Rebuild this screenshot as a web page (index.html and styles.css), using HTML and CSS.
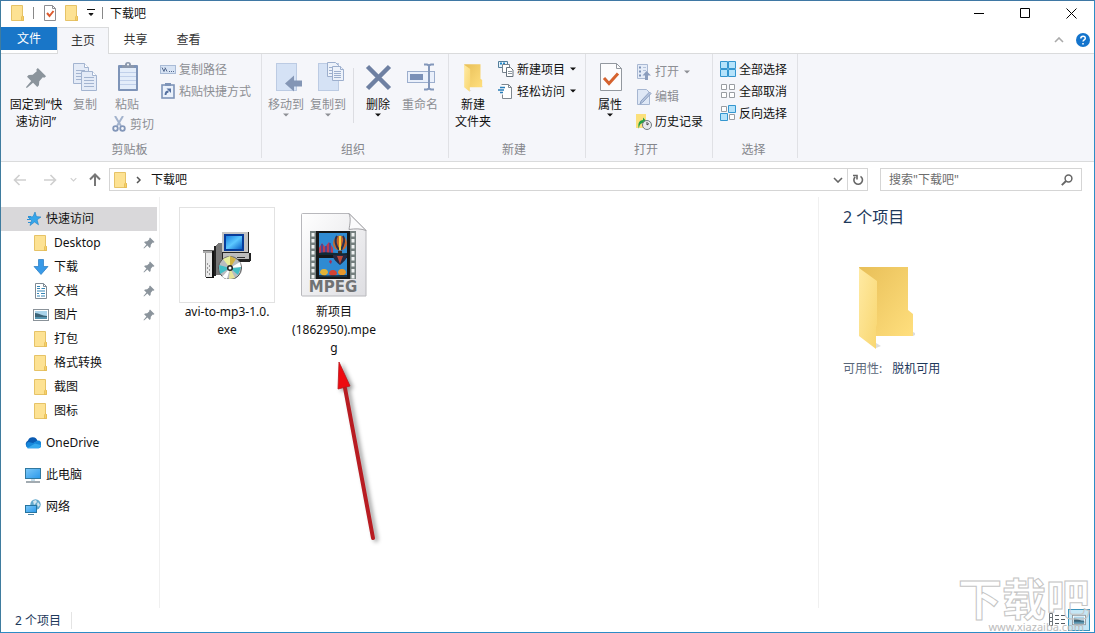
FILE: index.html
```
<!DOCTYPE html>
<html lang="zh-CN">
<head>
  <meta charset="UTF-8" />
  <meta name="viewport" content="width=device-width, initial-scale=1.0"/>
  <title>下载吧</title>
  <link rel="stylesheet" href="styles.css">
</head>
<body>
  <!-- shared icons -->
  <svg class="sprite" width="0" height="0">
    <defs>
      <linearGradient id="gold" x1="0" y1="0" x2="1" y2="1">
        <stop offset="0" stop-color="#e8bf58"/><stop offset="1" stop-color="#ffdf7e"/>
      </linearGradient>
      <linearGradient id="flap" x1="0" y1="0" x2="1" y2="1">
        <stop offset="0" stop-color="#ffeaa3"/><stop offset="1" stop-color="#f8d670"/>
      </linearGradient>
      <linearGradient id="screen" x1="0" y1="0" x2="1" y2="1">
        <stop offset="0" stop-color="#7cc8f8"/><stop offset="1" stop-color="#2a98ea"/>
      </linearGradient>
      <linearGradient id="paper" x1="0" y1="0" x2="1" y2="1">
        <stop offset="0" stop-color="#ffffff"/><stop offset="1" stop-color="#dedee2"/>
      </linearGradient>
      <linearGradient id="crt" x1="0" y1="0" x2="1" y2="1">
        <stop offset="0" stop-color="#1a80e0"/><stop offset="0.5" stop-color="#5cc8ff"/><stop offset="1" stop-color="#0a60c8"/>
      </linearGradient>
    </defs>
    <symbol id="i-folder" viewBox="0 0 16 16">
      <path d="M1.500.5h11v11h1v4h-12z" fill="#fde293" stroke="#e6c367"/>
      <path d="M11.500 15.500V12l1-1.500 1 1v4z" fill="#f6d06a" stroke="#e2b84f" stroke-width=".7"/>
    </symbol>
    <symbol id="i-bigfolder" viewBox="0 0 56 84">
      <path d="M0 1h49v43l5 4v22H12z" fill="url(#gold)"/>
      <path d="M0 2l18 13v43l-1 3v22L0 70z" fill="url(#flap)"/>
      <path d="M17 82l5-2-5-3zM54 70l4-2-4-2z" fill="#ddd"/>
    </symbol>
    <symbol id="i-check" viewBox="0 0 14 16">
      <path d="M1.500.5h8l3 3v12h-11z" fill="#fff" stroke="#8e8e92"/>
      <path d="M9.500.5v3h3" fill="none" stroke="#8e8e92"/>
      <path d="M4 8l2.500 3L10.500 6" fill="none" stroke="#dc5a2e" stroke-width="2"/>
    </symbol>
    <symbol id="i-pin" viewBox="0 0 12 12">
      <path d="M7 .5L11.500 5l-1 .8-.8-.2L7.800 7.800l-.2 2.200-.9.900L4.400 8.600 1 11.500l-.5-.5L3.400 7.600 1.100 5.300l.9-.9 2.200-.2L6.400 2.300l-.2-.9z" fill="#8b949c"/>
    </symbol>
    <symbol id="i-chev" viewBox="0 0 10 6"><path d="M1 1l4 4 4-4" fill="none" stroke="currentColor" stroke-width="1.600"/></symbol>
    <symbol id="i-tri" viewBox="0 0 6 4"><path d="M0 .5h6L3 3.500z" fill="currentColor"/></symbol>
    <symbol id="i-picture" viewBox="0 0 16 14">
      <rect x=".5" y="1.500" width="15" height="11" fill="#fff" stroke="#8a9299"/>
      <rect x="2" y="3" width="12" height="8" fill="#a9d3ea"/>
      <path d="M2 5c4 0 7 3 12 3v3H2z" fill="#3b6377"/><path d="M2 9h12v2H2z" fill="#5593ae"/>
    </symbol>
  </svg>

  <div class="window">
    <header class="titlebar">
      <svg class="ico"><use href="#i-folder"/></svg>
      <span class="bar"></span>
      <button class="quick" aria-label="属性"><svg width="14" height="16"><use href="#i-check"/></svg></button>
      <button class="quick" aria-label="新建文件夹"><svg class="ico"><use href="#i-folder"/></svg></button>
      <button class="quick more" aria-label="自定义快速访问工具栏"><svg width="8" height="8" viewBox="0 0 8 8"><path d="M0 .5h8M2 4.500h4L4 6.500z" stroke="#111" fill="#111" stroke-width="1"/></svg></button>
      <span class="bar"></span>
      <h1>下载吧</h1>
      <div class="controls">
        <button aria-label="最小化"><svg width="11" height="11"><path d="M0 5.500h10" stroke="#000"/></svg></button>
        <button aria-label="最大化"><svg width="11" height="11"><path d="M.5.5h9v9h-9z" fill="none" stroke="#000"/></svg></button>
        <button aria-label="关闭"><svg width="11" height="11"><path d="M.5.5l10 10M10.500.5l-10 10" stroke="#000"/></svg></button>
      </div>
    </header>

    <nav class="tabs">
      <button class="tab file-tab">文件</button>
      <button class="tab active">主页</button>
      <button class="tab">共享</button>
      <button class="tab">查看</button>
      <div class="tabs-end">
        <button aria-label="最小化功能区"><svg width="10" height="6" class="flip"><use href="#i-chev"/></svg></button>
        <button aria-label="帮助"><svg width="14" height="14" viewBox="0 0 14 14"><circle cx="7" cy="7" r="7" fill="#1474cc"/><path d="M4.800 5.500c0-3 4.500-3 4.500-.3C9.300 6.800 7 7 7 8.600M7 10v1.600" fill="none" stroke="#fff" stroke-width="1.500"/></svg></button>
      </div>
    </nav>

    <section class="ribbon">
      <div class="group clipboard">
        <div class="tools">
          <button class="big wide">
            <svg width="32" height="32" viewBox="0 0 32 32"><use href="#i-pin" x="5" y="5" width="22" height="22"/></svg>
            <span>固定到“快<br>速访问”</span>
          </button>
          <button class="big" disabled>
            <svg width="32" height="32" viewBox="0 0 32 32">
              <g fill="#e4ebf7" stroke="#a3b4d0"><path d="M4.500 1.500h11l4 4v16h-15z"/><path d="M15.500 1.500v4h4" fill="#fff"/><path d="M7 8.500h9M7 11.500h5M7 14.500h5M7 17.500h5"/>
              <path d="M12.500 9.500h11l4 4v15h-15z"/><path d="M23.500 9.500v4h4" fill="#fff"/><path d="M15 15.500h10M15 18.500h10M15 21.500h10M15 24.500h10"/></g>
            </svg>
            <span>复制</span>
          </button>
          <div class="stack">
            <button class="big" disabled>
              <svg width="32" height="32" viewBox="0 0 32 32">
                <rect x="7" y="3" width="20" height="26" rx="1" fill="#7e94b8"/><rect x="9" y="6" width="16" height="21" fill="#e3edfa"/>
                <path d="M9 10.500h16M9 14.500h16M9 18.500h16M9 22.500h16" stroke="#c0d0ea"/><path d="M11 6V3h3a3 3 0 0 1 6 0h3v3z" fill="#8b98ad"/><circle cx="17" cy="2.500" r="1" fill="#fff"/>
              </svg>
              <span>粘贴</span>
            </button>
            <button class="small cut" disabled>
              <svg class="ico" viewBox="0 0 16 16"><path d="M4 0l6 10M12 0L6 10" stroke="#a3b3cd" stroke-width="2"/><g fill="none" stroke="#8397b9" stroke-width="1.800"><circle cx="4.500" cy="12.500" r="2.300"/><circle cx="11.500" cy="12.500" r="2.300"/></g></svg>
              剪切
            </button>
          </div>
          <div class="rows">
            <button class="small" disabled>
              <svg class="ico" viewBox="0 0 16 16"><rect x=".5" y="4.500" width="15" height="8" fill="#d7e3f4" stroke="#a9bbd6"/><path d="M2 6.500l2 4 1-3M5 6.500l2 4M9 10.500h1M11 10.500h1M13 10.500h1" fill="none" stroke="#53688d"/></svg>
              复制路径
            </button>
            <button class="small" disabled>
              <svg class="ico" viewBox="0 0 16 16"><rect x="2" y="2" width="12" height="13" fill="#eaf1fb" stroke="#7e94b8" stroke-width="1.600"/><path d="M5 0h6v3H5z" fill="#7e94b8"/><path d="M5.500 12c0-2.500.5-3.500 3-3.500" fill="none" stroke="#54709f" stroke-width="1.800"/><path d="M6.500 5.500H11V10z" fill="#54709f"/></svg>
              粘贴快捷方式
            </button>
          </div>
        </div>
        <h2>剪贴板</h2>
      </div>

      <div class="group organise">
        <div class="tools">
          <button class="big" disabled>
            <svg width="32" height="32" viewBox="0 0 32 32"><rect x="6.500" y="1.500" width="20" height="27" fill="#d5e2f5" stroke="#bccbe3"/><path d="M15 21.500l9-8v5h8v6h-8v5z" fill="#8496b5"/></svg>
            <span>移动到</span>
            <svg class="tri"><use href="#i-tri"/></svg>
          </button>
          <button class="big" disabled>
            <svg width="32" height="32" viewBox="0 0 32 32"><rect x="6.500" y="1.500" width="20" height="27" fill="#d5e2f5" stroke="#bccbe3"/><g fill="#edf2fa" stroke="#9dafcd"><path d="M15.500.5h8l3 3v11h-11z"/><path d="M20.500 4.500h8l3 3v11h-11z"/><path d="M28.500 4.500v3h3M22 9.500h7M22 11.500h7M22 13.500h7M22 15.500h7M17 5.500h3M17 8.500h3M17 11.500h3"/></g></svg>
            <span>复制到</span>
            <svg class="tri"><use href="#i-tri"/></svg>
          </button>
          <span class="split"></span>
          <button class="big">
            <svg width="32" height="32" viewBox="0 0 32 32"><path d="M5.500 4.500l22 22M27.500 4.500l-22 22" stroke="#6e80a2" stroke-width="4.500"/></svg>
            <span>删除</span>
            <svg class="tri"><use href="#i-tri"/></svg>
          </button>
          <button class="big" disabled>
            <svg width="32" height="32" viewBox="0 0 32 32"><rect x="3.500" y="9.500" width="27" height="11" fill="#eaf0fb" stroke="#9caecd"/><rect x="6" y="12" width="13" height="6" fill="#7a90b7"/><path d="M20 2.500h3l2 1 2-1h3M25 3v24M20 27.500h3l2-1 2 1h3" fill="none" stroke="#8397ba" stroke-width="2"/></svg>
            <span>重命名</span>
          </button>
        </div>
        <h2>组织</h2>
      </div>

      <div class="group new">
        <div class="tools">
          <button class="big">
            <svg width="32" height="32" viewBox="0 0 32 32"><use href="#i-bigfolder" x="7" y="2" width="19" height="28"/></svg>
            <span>新建<br>文件夹</span>
          </button>
          <div class="rows">
            <button class="small">
              <svg class="ico" viewBox="0 0 16 16"><path d="M.5.5h9v6h-9z" fill="#e6f3fb" stroke="#547e9b"/><path d="M2 2.500h2M5 2.500h2" stroke="#2386c6" stroke-width="2"/><path d="M4.500 3.500h7v8h-7z" fill="#fff" stroke="#77838e"/><path d="M8.500 6.500h4l2.500 2.500v6.500H8.500z" fill="#fff" stroke="#66717c"/><path d="M10 10.500h4M10 12.500h4" stroke="#8c969f"/></svg>
              新建项目 <svg class="tri"><use href="#i-tri"/></svg>
            </button>
            <button class="small">
              <svg class="ico" viewBox="0 0 16 16"><path d="M3.500 1.500h7l3 3v11h-9v-4" fill="#fff" stroke="#7e878f"/><path d="M10.500 1.500v3h3" fill="none" stroke="#7e878f"/><path d="M2 4.500h5M0 7h6M2 9.500h3" stroke="#2a7db8" stroke-width="1.500"/></svg>
              轻松访问 <svg class="tri"><use href="#i-tri"/></svg>
            </button>
          </div>
        </div>
        <h2>新建</h2>
      </div>

      <div class="group open">
        <div class="tools">
          <button class="big">
            <svg width="32" height="32" viewBox="0 0 32 32"><path d="M6.500 1.500h16l5 5v22h-21z" fill="#fcfcfd" stroke="#93989f"/><path d="M22.500 1.500v5h5" fill="none" stroke="#93989f"/><path d="M10 16l5 5.500 9-10" fill="none" stroke="#d5622e" stroke-width="3"/></svg>
            <span>属性</span>
            <svg class="tri"><use href="#i-tri"/></svg>
          </button>
          <div class="rows tall">
            <button class="small" disabled>
              <svg class="ico" viewBox="0 0 16 16"><path d="M1.500.5h10v14h-10z" fill="#e5ecf8" stroke="#a9b8d2"/><path d="M3 3.500h2M3 7.500h2M3 11.500h2" stroke="#7f94b8" stroke-width="2"/><path d="M7 3.500h3M7 6.500h3" stroke="#b4c2da"/><path d="M6.500 11.500L10.500 7l4.500 4.500h-3V16H9v-4.500z" fill="#8b9dbd"/></svg>
              打开 <svg class="tri"><use href="#i-tri"/></svg>
            </button>
            <button class="small" disabled>
              <svg class="ico" viewBox="0 0 16 16"><path d="M1.500.5h9l3 3v12h-12z" fill="#dfe8f6" stroke="#a6b6d1"/><path d="M4 15l1-3L13.500 3l1.500 1.500-8.500 9z" fill="#b5c4de" stroke="#8ea1c2"/></svg>
              编辑
            </button>
            <button class="small">
              <svg class="ico" viewBox="0 0 16 16"><path d="M0 0h10v14H0z" fill="#fbe07b"/><path d="M3 15C1 9 4 6 7 6V3.500L11 8l-4 4V9c-2 0-4 2-4 6z" fill="#23a046"/><circle cx="11" cy="11" r="4.500" fill="#e6e9eb" stroke="#737a80"/><path d="M11 8v3l2-1.500" fill="none" stroke="#444"/></svg>
              历史记录
            </button>
          </div>
        </div>
        <h2>打开</h2>
      </div>

      <div class="group select">
        <div class="tools">
          <div class="rows">
            <button class="small">
              <svg class="ico" viewBox="0 0 16 16"><path d="M.5.5h7v7h-7zM8.500.5h7v7h-7zM.5 8.500h7v7h-7zM8.500 8.500h7v7h-7z" fill="#b5e3fb" stroke="#3496cf"/></svg>
              全部选择
            </button>
            <button class="small">
              <svg class="ico" viewBox="0 0 16 16"><path d="M1.500 1.500h5v5h-5zM9.500 1.500h5v5h-5zM1.500 9.500h5v5h-5zM9.500 9.500h5v5h-5z" fill="#fff" stroke="#999da2"/></svg>
              全部取消
            </button>
            <button class="small">
              <svg class="ico" viewBox="0 0 16 16"><path d="M1.500 1.500h5v5h-5zM9.500 9.500h5v5h-5z" fill="#fff" stroke="#999da2"/><path d="M8.500.5h7v7h-7zM.5 8.500h7v7h-7z" fill="#b5e3fb" stroke="#3496cf"/></svg>
              反向选择
            </button>
          </div>
        </div>
        <h2>选择</h2>
      </div>
    </section>

    <div class="address-row">
      <button class="nav off" aria-label="后退"><svg width="14" height="12"><path d="M6.500 1L1.500 6l5 5M2 6h11" fill="none" stroke="currentColor" stroke-width="1.600"/></svg></button>
      <button class="nav off" aria-label="前进"><svg width="14" height="12"><path d="M7.500 1l5 5-5 5M12 6H1" fill="none" stroke="currentColor" stroke-width="1.600"/></svg></button>
      <button class="nav off narrow" aria-label="最近浏览的位置"><svg width="7" height="5"><use href="#i-chev"/></svg></button>
      <button class="nav up" aria-label="上移"><svg width="12" height="14"><path d="M1 6.500l5-5 5 5M6 2v11" fill="none" stroke="currentColor" stroke-width="2"/></svg></button>
      <div class="address">
        <svg class="ico"><use href="#i-folder"/></svg>
        <svg class="crumb" width="6" height="8"><path d="M1 1l3 3-3 3" fill="none" stroke="#555" stroke-width="1.500"/></svg>
        <a href="#">下载吧</a>
        <button class="drop" aria-label="以前的位置"><svg width="10" height="6"><use href="#i-chev"/></svg></button>
        <button class="refresh" aria-label="刷新"><svg width="12" height="12" viewBox="0 0 12 12"><path d="M8.500 2.300A4.300 4.300 0 1 1 3.200 2.800" fill="none" stroke="#666" stroke-width="1.600"/><path d="M1 1.500h4v4" fill="none" stroke="#666" stroke-width="1.600"/></svg></button>
      </div>
      <label class="search">
        <input type="text" aria-label="搜索" placeholder='搜索"下载吧"'>
        <svg width="12" height="12" viewBox="0 0 12 12"><circle cx="7.500" cy="4.500" r="3.400" fill="none" stroke="#666" stroke-width="1.500"/><path d="M5 7L.8 11.200" stroke="#666" stroke-width="1.900"/></svg>
      </label>
    </div>

    <div class="content">
      <nav class="sidebar">
        <a href="#" class="selected"><svg class="ico" viewBox="0 0 16 16"><path d="M10 1l1.400 4.600 4.600.4-3.900 2.800 1.400 5L9.500 11l-4.500 3.500 1.500-5L3 6l5-.3z" fill="#36a6ea" stroke="#1d82c8" stroke-width=".6"/><path d="M3 5.500h3M2 8.500h4M3 11.500h3" stroke="#2c8fd2"/></svg>快速访问</a>
        <a href="#" class="sub"><svg class="ico"><use href="#i-folder"/></svg>Desktop<svg class="pin"><use href="#i-pin"/></svg></a>
        <a href="#" class="sub"><svg class="ico" viewBox="0 0 16 16"><path d="M5.500.5h5v7H15L8 15.500 1 7.500h4.500z" fill="#389ae8" stroke="#2479c0" stroke-width=".7"/></svg>下载<svg class="pin"><use href="#i-pin"/></svg></a>
        <a href="#" class="sub"><svg class="ico" viewBox="0 0 16 16"><path d="M2.500.5h8l3 3v12h-11z" fill="#fff" stroke="#7f8b95"/><path d="M10.500.5v3h3" fill="none" stroke="#7f8b95"/><path d="M4 5.500h3M4 3.500h3M8.500 5.500h3.500M4 8h8M4 10.500h2M8 10.500h4M4 13h3M8 13h4" stroke="#3585b5" stroke-width="1.200"/></svg>文档<svg class="pin"><use href="#i-pin"/></svg></a>
        <a href="#" class="sub"><svg class="ico"><use href="#i-picture"/></svg>图片<svg class="pin"><use href="#i-pin"/></svg></a>
        <a href="#" class="sub"><svg class="ico"><use href="#i-folder"/></svg>打包</a>
        <a href="#" class="sub"><svg class="ico"><use href="#i-folder"/></svg>格式转换</a>
        <a href="#" class="sub"><svg class="ico"><use href="#i-folder"/></svg>截图</a>
        <a href="#" class="sub"><svg class="ico"><use href="#i-folder"/></svg>图标</a>
        <a href="#" class="root"><svg class="ico" viewBox="0 0 16 16"><path d="M2 12a4 4 0 0 1 1-6.500A5 5 0 0 1 12.500 6z" fill="#0a5bb2"/><path d="M3 13.300A3.400 3.400 0 0 1 3.500 7L8 8l4.500-2.500A4 4 0 0 1 14 13.300z" fill="#1687da"/><path d="M2 13.300L10 8.500l5.500 1.500a2.500 2.500 0 0 1-2 3.300z" fill="#35a9ee"/></svg>OneDrive</a>
        <a href="#" class="root"><svg class="ico" viewBox="0 0 16 16"><rect x=".5" y="1.500" width="15" height="10" fill="url(#screen)" stroke="#31789f"/><path d="M6 13h4" stroke="#8cb9d4"/><path d="M1 15h14" stroke="#65747e" stroke-width="1.200"/></svg>此电脑</a>
        <a href="#" class="root"><svg class="ico" viewBox="0 0 16 16"><circle cx="10.500" cy="5.500" r="5.200" fill="#63a9cd"/><path d="M8 2l3-1 1 2-3 3zM13 3l2 3-2 2-1-3z" fill="#d4e6ee"/><rect x=".5" y="6.500" width="11" height="7" fill="url(#screen)" stroke="#26749f"/><path d="M3 15.500h6" stroke="#4d86a8"/></svg>网络</a>
      </nav>

      <main class="files">
        <figure class="file">
          <div class="thumb framed">
            <svg width="48" height="48" viewBox="0 0 48 48" shape-rendering="crispEdges">
              <path d="M12 15l4-3h3v32h-7z" fill="#777"/><path d="M11 15h2v30h-2z" fill="#222"/>
              <path d="M0 19h11v3H0z" fill="#aaa"/><path d="M0 19h11v1H0z" fill="#666"/>
              <path d="M3 22h6v24H3z" fill="#e9e9e9"/><path d="M2 22h1v24H2z" fill="#888"/><path d="M9 20h2v27H9zM3 46h8v1H3z" fill="#111"/>
              <path d="M4 32h1v2H4zM6 34h1v2H6zM4 36h1v2H4zM6 38h1v2H6zM4 40h1v2H4zM6 42h1v2H6z" fill="#999"/>
              <path d="M19 22h29v8l-3 1H19z" fill="#222"/><path d="M20 22h26v6H20z" fill="#bcbcbc"/><path d="M34 26h8v1h-8z" fill="#333"/>
              <path d="M19 1h27v21H19z" fill="#222"/><path d="M19 1h26v20H19z" fill="#c4c4c4"/><path d="M21 3h20v17H21z" fill="#083c9a"/><path d="M23 5h16v13H23z" fill="url(#crt)"/>
              <g shape-rendering="auto"><circle cx="27" cy="37" r="11.500" fill="#b8bcc0" stroke="#555"/><path d="M27 37L20 28l7-3z" fill="#e8ef9b"/><path d="M27 37V25l6 3z" fill="#d2b343"/><path d="M27 37l-11-3 1 9z" fill="#42bec5"/><path d="M27 37l11-1-3 8z" fill="#42bec5"/><path d="M27 37l5 10-6 1z" fill="#e7e498"/><path d="M27 37l10-6 1 5zM27 37l-8 9 5 2z" fill="#fff"/><circle cx="27" cy="37" r="3" fill="#222"/><circle cx="27" cy="37" r="1.500" fill="#fff"/></g>
            </svg>
          </div>
          <figcaption>avi-to-mp3-1.0.<br>exe</figcaption>
        </figure>
        <figure class="file">
          <div class="thumb">
            <svg width="68" height="86" viewBox="0 0 68 86">
              <path d="M2.500 1.500H49l17 17v65.500H2.500a1 1 0 0 1-1-1v-80.500a1 1 0 0 1 1-1z" fill="url(#paper)" stroke="#b8b8bc"/>
              <path d="M49 1.500c2 5 1 10 0 16 6-1 12-1 17 1z" fill="#fbfbfc" stroke="#a2a2a6"/>
              <path d="M10 19h46v48H10z" fill="#75807f"/><path d="M16 19h34v48H16z" fill="#151819"/>
              <path d="M13 21v46M53 21v46" stroke="#eef1f1" stroke-width="3" stroke-dasharray="3.500 2.500"/>
              <path d="M19 21h28v22H19zM19 46h28v19H19z" fill="#2f8bd2"/>
              <path d="M19 36l3-5 3 4 4-5 4 6v7H19z" fill="#bd3c50"/><path d="M22 32v10M26 34v8M30 31v11" stroke="#284aa6" stroke-width="1.500"/>
              <ellipse cx="40" cy="31" rx="7" ry="7.500" fill="#c8692c"/><path d="M37 24c-3 4-1 10 2 14M43 24c3 4 0 10-2 14" fill="none" stroke="#273254" stroke-width="2"/><path d="M40 24v14" stroke="#f4cf3d" stroke-width="2"/><path d="M38 39h4v3h-4z" fill="#3e2920"/>
              <path d="M19 41c8-2 14 1 28 0v2H19z" fill="#122a36"/>
              <path d="M33 43h14c0 5-4 7-7 10-3-3-7-5-7-10z" fill="#252943"/><path d="M37 44l3 8 3-8z" fill="#b94636"/>
              <path d="M20 61a4 4 0 0 1 8 0l-4 4z" fill="#e3b336"/><path d="M29 62a4 4 0 0 1 8 0l-4 3z" fill="#d34335"/><path d="M38 61a4 4 0 0 1 8 0l-4 4z" fill="#e6982d"/>
              <path d="M30 48l2 1-1 3-2-2z" fill="#a92c54"/><path d="M19 63c8 1 16 0 28 0v2H19z" fill="#173247"/>
              <text x="33" y="80" text-anchor="middle" class="mpeg">MPEG</text>
            </svg>
          </div>
          <figcaption>新项目<br>(1862950).mpe<br>g</figcaption>
        </figure>
        <svg class="pointer" width="60" height="190" viewBox="0 0 60 190">
          <path d="M15 32l28 150" stroke="#b81c22" stroke-width="4" stroke-linecap="round"/>
          <path d="M9 6l11 24-12 3z" fill="#ee0a10" stroke="#b8161c" stroke-width=".8"/>
        </svg>
      </main>

      <aside class="details">
        <h2>2 个项目</h2>
        <svg width="56" height="84"><use href="#i-bigfolder"/></svg>
        <dl><dt>可用性:</dt><dd>脱机可用</dd></dl>
      </aside>
    </div>

    <footer class="status">
      <span class="count">2 个项目</span>
      <button aria-label="详细信息"><svg width="16" height="14" viewBox="0 0 16 14"><path d="M.5.5h3v12h-3zM.5 4.500h3M.5 8.500h3" fill="#fff" stroke="#6c7378"/><path d="M6 2.500h4M12 2.500h4M6 6.500h4M12 6.500h4M6 10.500h4M12 10.500h4" stroke="#555c61"/></svg></button>
      <button class="on" aria-label="大图标"><svg width="14" height="12"><use href="#i-picture"/></svg></button>
    </footer>
    <div class="watermark"><b>下载吧</b><small>www.xiazaiba.com</small></div>
  </div>
</body>
</html>
```
FILE: styles.css
```
* {
  box-sizing: border-box;
}

body {
  margin: 0;
  font: 12px/17px "Noto Sans", "Noto Sans CJK SC", sans-serif;
  color: #111;
  background: #fff;
}

button {
  font: inherit;
  color: inherit;
  background: none;
  border: none;
  padding: 0;
}

a {
  color: inherit;
  text-decoration: none;
}

h1, h2, dl, dd, figure {
  margin: 0;
  font-size: 12px;
  font-weight: normal;
}

svg {
  display: block;
  flex-shrink: 0;
}

.sprite {
  position: absolute;
}

.ico {
  width: 16px;
  height: 16px;
}

.tri {
  width: 6px;
  height: 4px;
}

.window {
  position: relative;
  display: flex;
  flex-direction: column;
  min-height: 100vh;
  border: 1px solid #2d8cc6;
  border-top-color: #3f78a4;
  border-left-color: #3f7c9f;
}

/* title bar */
.titlebar {
  display: flex;
  align-items: center;
  height: 26px;
  padding: 0 0 2px 9px;
}

.bar {
  width: 1px;
  height: 12px;
  margin: 0 7px;
  background: #888;
}

.quick {
  margin-left: 2px;
}

.quick + .quick {
  margin-left: 7px;
}

.controls {
  display: flex;
  margin-left: auto;
}

.controls button {
  display: flex;
  justify-content: center;
  width: 46px;
}

/* ribbon tabs */
.tabs {
  display: flex;
  height: 27px;
  border-bottom: 1px solid #dadbdc;
}

.tab {
  width: 53px;
  padding-bottom: 2px;
  color: #333;
}

.tab.file-tab {
  width: 56px;
  height: 23px;
  padding: 0;
  color: #fff;
  background: #1976c8;
}

.tab.active {
  width: 52px;
  height: 27px;
  background: #f5f6fa;
  border: 1px solid #dadbdc;
  border-bottom: none;
}

.tabs-end {
  display: flex;
  align-items: center;
  gap: 12px;
  margin-left: auto;
  padding-right: 4px;
  color: #aaa;
}

.flip {
  transform: rotate(180deg);
}

/* ribbon */
.ribbon {
  display: flex;
  height: 108px;
  background: #f5f6fa;
  border-bottom: 1px solid #dadbdc;
}

.group {
  display: flex;
  flex-direction: column;
  margin-bottom: 3px;
  padding: 0 7px 0 3px;
  border-right: 1px solid #e0e1e5;
}

.group.clipboard {
  padding: 0 10px 0 7px;
}

.group.new,
.group.open,
.group.select {
  padding-right: 9px;
}

.group.select {
  padding: 0 10px 0 7px;
}

.group h2 {
  text-align: center;
  color: #85878c;
}

.tools {
  display: flex;
  flex: 1;
  align-items: flex-start;
}

.big {
  display: flex;
  flex-direction: column;
  align-items: center;
  width: 42px;
  padding-top: 8px;
  white-space: nowrap;
}

.big.wide {
  width: 56px;
}

.big span {
  margin-top: 2px;
}

button:disabled {
  color: #8d8f94;
}

.small {
  display: flex;
  align-items: center;
  gap: 3px;
  height: 22px;
  white-space: nowrap;
}

.small .tri {
  margin-left: 2px;
}

.cut {
  padding-left: 5px;
}

.stack {
  width: 50px;
}

.rows {
  padding: 4px 0 0 4px;
}

.rows.tall {
  padding: 5px 0 0 5px;
}

.rows.tall .small {
  height: 25px;
}

.select .rows {
  padding-left: 0;
}

.split {
  width: 1px;
  height: 55px;
  margin: 14px 3px 0 4px;
  background: #dcdde2;
}

/* address row */
.address-row {
  display: flex;
  height: 35px;
  padding: 6px 12px 6px 4px;
}

.nav {
  display: flex;
  align-items: center;
  justify-content: center;
  width: 30px;
  color: #777;
}

.nav.off {
  color: #cfcfcf;
}

.nav.narrow {
  width: 16px;
}

.nav.up {
  width: 28px;
}

.address,
.search {
  display: flex;
  align-items: center;
  border: 1px solid #d5d5d5;
}

.address {
  flex: 1;
  padding-left: 3px;
}

.crumb {
  margin: 0 9px 0 7px;
}

.drop {
  margin-left: auto;
  padding: 0 4px;
  color: #666;
}

.refresh {
  align-self: stretch;
  padding: 0 3px 0 4px;
  border-left: 1px solid #d5d5d5;
}

.search {
  width: 202px;
  margin-left: 12px;
  padding: 0 8px;
}

.search input {
  flex: 1;
  min-width: 0;
  padding: 0;
  font: inherit;
  border: none;
  outline: none;
}

.search input::placeholder {
  color: #6d6d6d;
}

/* panes */
.content {
  display: flex;
  flex: 1;
}

.sidebar {
  width: 159px;
  padding: 10px 2px 0 0;
  border-right: 1px solid #f0f0f0;
}

.sidebar a {
  display: flex;
  align-items: center;
  gap: 5px;
  height: 24px;
  padding: 0 0 1px 24px;
}

.sidebar .selected {
  background: #d9d8da;
}

.sidebar .sub {
  padding-left: 32px;
}

.sidebar .root {
  margin-top: 8px;
}

.pin {
  width: 12px;
  height: 12px;
  margin: 0 2px 0 auto;
}

.files {
  position: relative;
  display: flex;
  flex: 1;
  gap: 11px;
  padding: 10px 19px;
}

.file {
  width: 96px;
  line-height: 18px;
  text-align: center;
}

.thumb {
  display: flex;
  align-items: center;
  justify-content: center;
  height: 96px;
}

.framed {
  border: 1px solid #e2e2e2;
}

.mpeg {
  font: bold 15px "DejaVu Sans", sans-serif;
  fill: #707274;
}

.pointer {
  position: absolute;
  left: 170px;
  top: 159px;
  filter: drop-shadow(3px 2px 2px rgba(0, 0, 0, 0.4));
}

.details {
  width: 276px;
  padding: 10px 24px;
  border-left: 1px solid #f0f0f0;
}

.details h2 {
  font-size: 16px;
  line-height: 20px;
  color: #1e395b;
}

.details svg {
  margin: 39px 16px 10px;
}

.details dl {
  display: flex;
  gap: 10px;
}

.details dt {
  color: #5a6779;
}

.details dd {
  color: #1e395b;
}

/* status bar */
.status {
  display: flex;
  align-items: center;
  height: 24px;
  padding: 0 4px 0 14px;
}

.count {
  margin-right: auto;
  padding-right: 10px;
  color: #1e395b;
  border-right: 1px solid #e4e4e4;
}

.status button {
  display: flex;
  align-items: center;
  justify-content: center;
  width: 22px;
  height: 22px;
}

.status .on {
  background: #c5e6f5;
  border: 1px solid #3a94bd;
}

.watermark {
  position: absolute;
  right: 4px;
  bottom: 0;
  text-align: right;
  pointer-events: none;
}

.watermark b {
  display: block;
  font-size: 44px;
  line-height: 44px;
  color: transparent;
  -webkit-text-stroke: 1px #c4c4c4;
}

.watermark small {
  display: block;
  padding-right: 6px;
  font-size: 11px;
  line-height: 11px;
  color: #bbb;
}
```
